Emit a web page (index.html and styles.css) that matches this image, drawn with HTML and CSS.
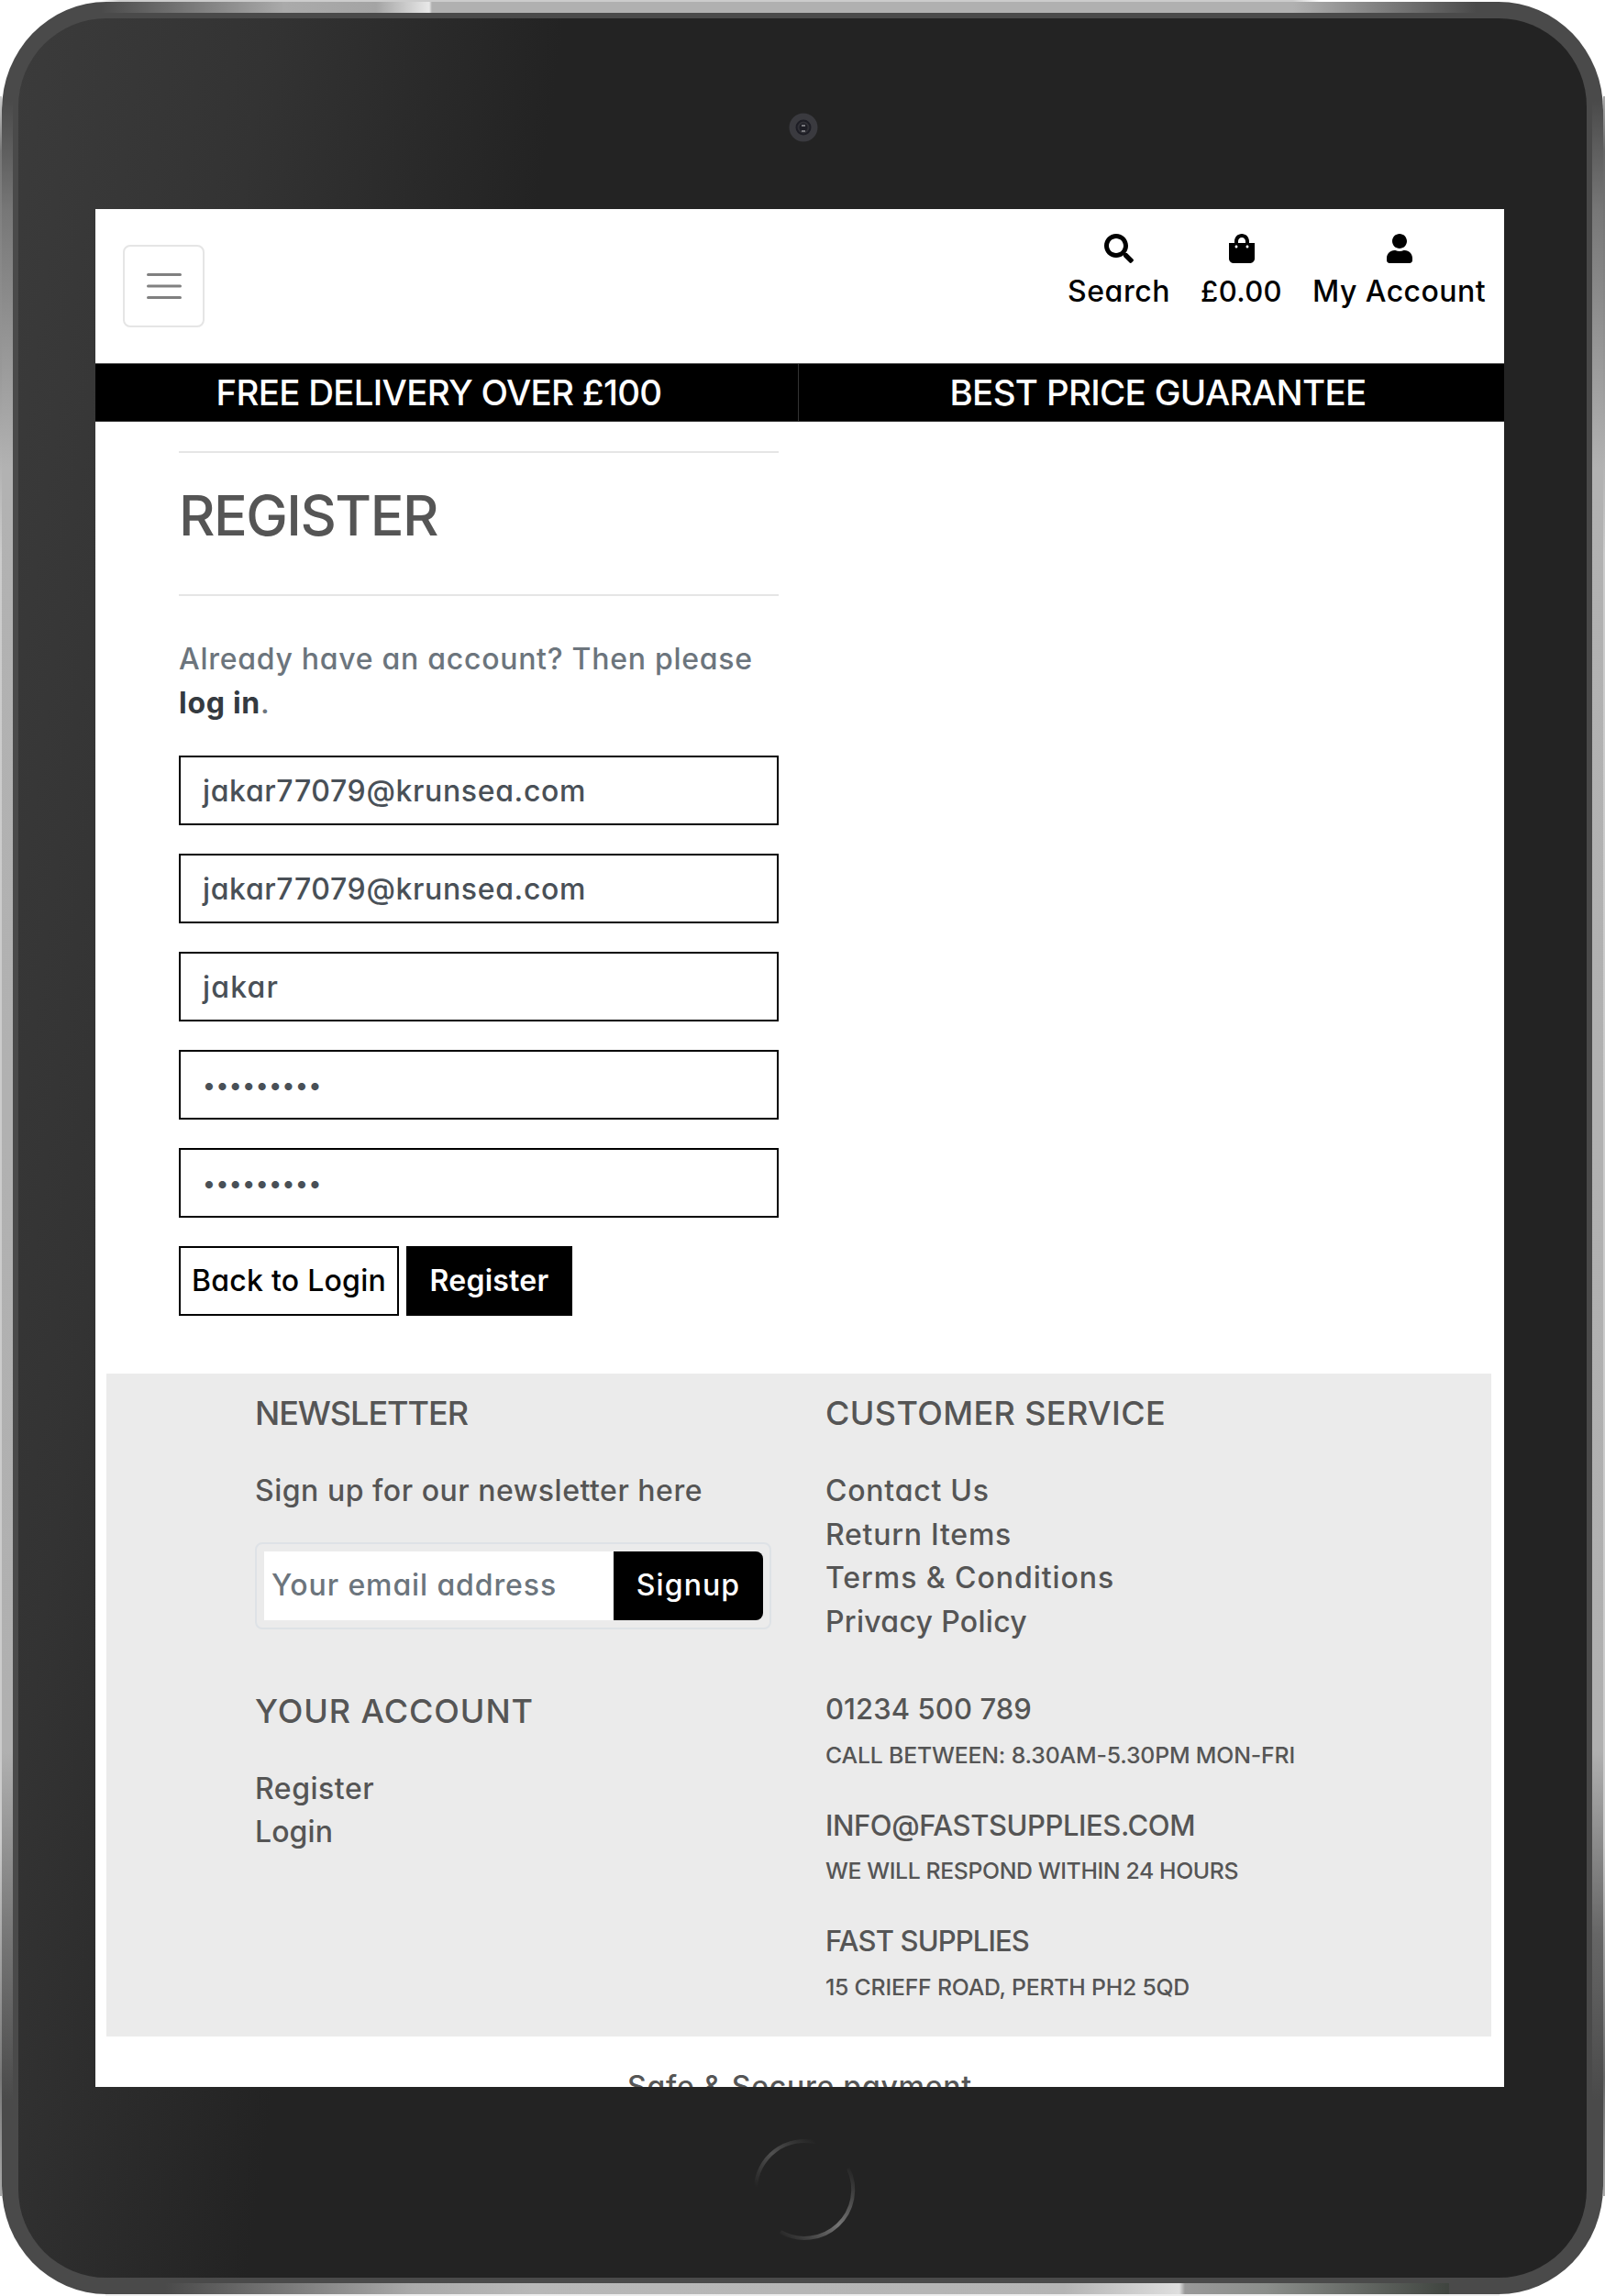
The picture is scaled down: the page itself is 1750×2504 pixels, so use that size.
FILE: index.html
```html
<!DOCTYPE html>
<html lang="en">
<head>
<meta charset="utf-8">
<title>Register</title>
<link rel="stylesheet" href="styles.css">
</head>
<body>
<div class="frame">
<div class="tablet">
  <div class="bezel">
    <svg class="camera" viewBox="0 0 40 40"><circle cx="20" cy="20" r="12" fill="#1d1d25" stroke="#3a3a3f" stroke-width="7"/><circle cx="20" cy="20" r="5.500" fill="none" stroke="#303036" stroke-width="2"/><path d="M18 18h4M18 24h4" stroke="#77777c" stroke-width="2"/></svg>
    <div class="screen">
      <header class="header">
        <button class="menu" aria-label="Menu"><svg viewBox="0 0 38 30"><path d="M1.500 2.500h35M1.500 15h35M1.500 27.500h35" stroke="#808080" stroke-width="3" stroke-linecap="round"/></svg></button>
        <nav class="nav">
          <a class="nav-item nav-search"><svg viewBox="0 0 512 512" width="32"><path d="M505 442.700L405.300 343c-4.500-4.500-10.600-7-17-7H372c27.600-35.300 44-79.700 44-128C416 93.100 322.900 0 208 0S0 93.100 0 208s93.100 208 208 208c48.300 0 92.700-16.400 128-44v16.300c0 6.400 2.500 12.500 7 17l99.700 99.700c9.400 9.400 24.600 9.400 33.900 0l28.300-28.300c9.400-9.400 9.400-24.600.1-34zM208 336c-70.700 0-128-57.200-128-128 0-70.700 57.200-128 128-128 70.700 0 128 57.200 128 128 0 70.700-57.200 128-128 128z"/></svg>Search</a>
          <a class="nav-item nav-basket"><svg viewBox="0 0 448 512" width="28"><path d="M352 160v-32C352 57.420 294.579 0 224 0 153.420 0 96 57.420 96 128v32H0v272c0 44.183 35.817 80 80 80h288c44.183 0 80-35.817 80-80V160h-96zm-192-32c0-35.290 28.710-64 64-64s64 28.710 64 64v32H160v-32zm160 120c-13.255 0-24-10.745-24-24s10.745-24 24-24 24 10.745 24 24-10.745 24-24 24zm-192 0c-13.255 0-24-10.745-24-24s10.745-24 24-24 24 10.745 24 24-10.745 24-24 24z"/></svg>£0.00</a>
          <a class="nav-item nav-account"><svg viewBox="0 0 448 512" width="28"><path d="M224 256c70.700 0 128-57.300 128-128S294.700 0 224 0 96 57.300 96 128s57.300 128 128 128zm89.600 32h-16.700c-22.200 10.200-46.900 16-72.900 16s-50.600-5.800-72.900-16h-16.700C60.200 288 0 348.200 0 422.400V464c0 26.500 21.500 48 48 48h352c26.500 0 48-21.500 48-48v-41.600c0-74.200-60.200-134.400-134.400-134.400z"/></svg>My Account</a>
        </nav>
      </header>
      <div class="usp">
        <div class="usp-item usp-left">FREE DELIVERY OVER £100</div>
        <div class="usp-item usp-right">BEST PRICE GUARANTEE</div>
      </div>
      <main class="main">
        <hr class="rule">
        <h1 class="title">REGISTER</h1>
        <hr class="rule">
        <p class="intro">Already have an account? Then please<br><a class="login">log in</a>.</p>
        <form class="form">
          <div class="field">jakar77079@krunsea.com</div>
          <div class="field">jakar77079@krunsea.com</div>
          <div class="field field-name">jakar</div>
          <div class="field field-password">•••••••••</div>
          <div class="field field-password">•••••••••</div>
          <div class="actions"><a class="btn btn-light">Back to Login</a><a class="btn btn-dark">Register</a></div>
        </form>
      </main>
      <footer class="footer">
        <div class="col">
          <h5 class="heading heading-news">NEWSLETTER</h5>
          <div class="lines">Sign up for our newsletter here</div>
          <div class="signup"><div class="email">Your email address</div><div class="send">Signup</div></div>
          <h5 class="heading heading-account">YOUR ACCOUNT</h5>
          <div class="lines">Register<br><span class="link-login">Login</span></div>
        </div>
        <div class="col">
          <h5 class="heading">CUSTOMER SERVICE</h5>
          <div class="lines links">Contact Us<br>Return Items<br><span class="link-terms">Terms &amp; Conditions</span><br><span class="link-privacy">Privacy Policy</span></div>
          <div class="contact phone">01234 500 789<small>CALL BETWEEN: 8.30AM-5.30PM MON-FRI</small></div>
          <div class="contact mail">INFO@FASTSUPPLIES.COM<small>WE WILL RESPOND WITHIN 24 HOURS</small></div>
          <div class="contact address">FAST SUPPLIES<small>15 CRIEFF ROAD, PERTH PH2 5QD</small></div>
        </div>
      </footer>
      <p class="secure">Safe &amp; Secure payment</p>
    </div>
    <svg class="home" viewBox="0 0 120 120"><defs><linearGradient id="a" x1="0" y1="1" x2="1" y2="0"><stop offset="0" stop-color="#232323"/><stop offset=".5" stop-color="#505050"/><stop offset="1" stop-color="#232323"/></linearGradient><linearGradient id="b" x1="0" y1="1" x2="1" y2="0"><stop offset="0" stop-color="#232323"/><stop offset=".5" stop-color="#747474"/><stop offset="1" stop-color="#232323"/></linearGradient></defs><path d="M7 57A53 53 0 0 1 72 8.400" fill="none" stroke="url(#a)" stroke-width="4"/><path d="M34 106A53 53 0 0 0 108 37" fill="none" stroke="url(#b)" stroke-width="4"/></svg>
  </div>
</div>
</div>
</body>
</html>
```
FILE: styles.css
```css
* { box-sizing: border-box; }
body {
  margin: 0;
  background: #fff;
  color: #555;
  font: 500 32px/48px Inter, sans-serif;
  font-feature-settings: "cv11";
}
h1, h5, p { margin: 0; font-weight: 500; }

/* Device: thin highlight, metal ring, dark bezel */
.frame {
  width: 1750px;
  height: 2504px;
  padding: 2px;
  background:
    linear-gradient(90deg, transparent, #ccc 20px, #ccc 1300px, transparent) 110px 0 / 1330px 2px no-repeat,
    linear-gradient(#eee, #eee) 115px 2502px / 1520px 2px no-repeat,
    linear-gradient(180deg, #ccc, #777 60px, #999 300px, #ccc 500px, #ccc 1900px, #777 2160px, #aaa) 0 105px / 2px 2290px no-repeat,
    linear-gradient(180deg, #aaa, #666 60px, #999 300px, #ccc 500px, #ccc 1900px, #666 2160px, #aaa) 1748px 105px / 2px 2290px no-repeat;
}
.tablet {
  height: 2500px;
  padding: 18px;
  border-radius: 114px / 118px;
  background:
    linear-gradient(90deg, transparent, #aaa 200px, #a4a4a4 300px, #e8e8e8 358px, #b0b0b0 361px, #b0b0b0 1300px, transparent) 108px 0 / 1500px 12px no-repeat,
    linear-gradient(90deg, transparent, #aaa 270px, #b8b8b8 400px, #b4b4b4 980px, #dedede 1106px, #999 1112px, #8b8e8b 1200px, #3f443f 1400px) 178px 2488px / 1400px 12px no-repeat,
    linear-gradient(180deg, transparent, #777 120px, #b2b2b2 400px, #b0b0b0 1800px, #777 2000px, transparent) 0 108px / 12px 2180px no-repeat,
    linear-gradient(180deg, transparent, #777 120px, #b2b2b2 400px, #b0b0b0 1800px, #666 2000px, transparent) 1734px 108px / 12px 2180px no-repeat,
    #4a4a4a;
}
.bezel {
  height: 2464px;
  border-radius: 96px;
  padding: 99px 84px 0;
  display: flex;
  flex-direction: column;
  background: linear-gradient(98deg, #3b3b3b 0, #333 270px, #232323 590px);
}
.camera { width: 40px; height: 40px; margin: 0 0 69px 752px; }
.home { width: 120px; height: 120px; margin: 52px 0 0 713px; }
.screen { width: 1536px; height: 2048px; flex: none; overflow: hidden; background: #fff; }

.header { height: 168px; display: flex; justify-content: space-between; padding: 27px 20px 0 30px; color: #000; }
.menu {
  width: 89px;
  height: 90px;
  margin-top: 12px;
  border: 2px solid #e5e5e5;
  border-radius: 8px;
  background: #fff;
  display: flex;
  align-items: center;
  justify-content: center;
  padding: 0;
}
.menu svg { width: 38px; height: 30px; }
.nav { display: flex; gap: 33px; }
.nav-item { display: flex; flex-direction: column; align-items: center; gap: 7px; }
.nav-item svg { height: 32px; }
.nav-search { letter-spacing: .0172em; }
.nav-basket { font-size: 31px; letter-spacing: .0129em; }
.nav-account { letter-spacing: .0141em; }

.usp {
  height: 64px;
  display: flex;
  background: #000;
  border-top: 1px solid #555;
  border-bottom: 1px solid #333;
  color: #fff;
  font-size: 38.5px;
  line-height: 62px;
}
.usp-item { text-align: center; }
.usp-left { width: 767px; padding-right: 17px; border-right: 1px solid #333; letter-spacing: -.0187em; }
.usp-right { flex: 1; padding-left: 14px; letter-spacing: -.0174em; }

.main { width: 654px; margin-left: 91px; padding-top: 32px; height: 1038px; }
.rule { height: 2px; border: 0; margin: 0; background: #e5e5e5; }
.title { font-size: 61px; line-height: 77px; margin: 30px 0 47px; letter-spacing: -.0248em; }
.intro { color: #6c757d; margin: 45px 0 33px; letter-spacing: .0225em; }
.login { color: #343a40; font-weight: 700; }

.form { display: flex; flex-direction: column; gap: 31px; color: #495057; }
.field { height: 76px; border: 2px solid #000; padding: 0 24px; line-height: 74px; letter-spacing: .02em; }
.field-name { letter-spacing: .036em; }
.field-password { font-size: 26px; letter-spacing: .022em; }
.actions { display: flex; gap: 8px; }
.btn { height: 76px; line-height: 72px; border: 2px solid #000; text-align: center; letter-spacing: .008em; }
.btn-light { width: 240px; color: #000; }
.btn-dark { width: 181px; background: #000; color: #fff; font-weight: 600; }

.footer { width: 1510px; height: 723px; margin-left: 12px; padding: 21px 0 0 162px; background: #ebebeb; display: flex; }
.col { width: 622px; }
.heading { font-size: 36px; line-height: 44px; margin-bottom: 39px; letter-spacing: .0106em; }
.heading-news { letter-spacing: -.0287em; }
.heading-account { letter-spacing: .0257em; }
.lines { line-height: 47.6px; letter-spacing: .0162em; }
.links { letter-spacing: .0235em; }
.link-login { letter-spacing: .003em; }
.link-terms { letter-spacing: .0292em; }
.link-privacy { letter-spacing: .0095em; }
.signup {
  width: 563px;
  height: 95px;
  margin: 32px 0 67px;
  border: 2px solid #dee2e6;
  border-radius: 8px;
  padding: 8px 7px 8px 8px;
  display: flex;
}
.email { flex: 1; background: #fff; color: #6c757d; padding-left: 8px; line-height: 73px; letter-spacing: .0278em; }
.send {
  width: 163px;
  background: #000;
  color: #fff;
  border-radius: 0 8px 8px 0;
  text-align: center;
  line-height: 73px;
  letter-spacing: .0347em;
}
.contact { margin-top: 27px; font-size: 31px; line-height: 47.6px; }
.lines + .contact { margin-top: 47.6px; }
.contact small { display: block; font-size: 24.8px; line-height: 52px; }
.phone { letter-spacing: .003em; }
.phone small { letter-spacing: -.0066em; }
.mail { letter-spacing: -.0141em; }
.mail small { letter-spacing: -.0156em; }
.address { letter-spacing: -.028em; }
.address small { letter-spacing: -.0086em; }
.secure { margin-top: 31px; text-align: center; letter-spacing: .0235em; }
```
